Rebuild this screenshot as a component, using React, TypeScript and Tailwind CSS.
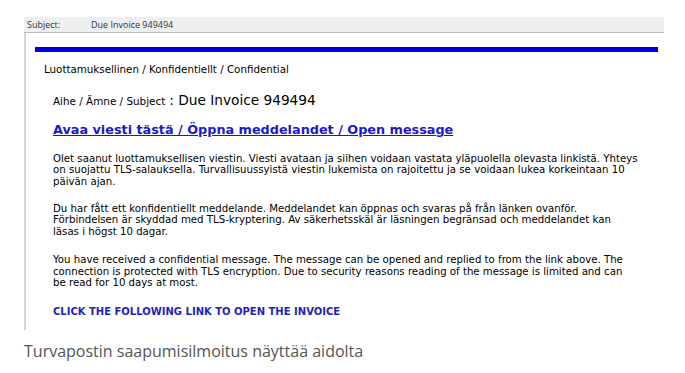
export default function App() {
  const body = "font-['DejaVu_Sans',Verdana,sans-serif]";
  return (
    <div className="w-[685px] h-[373px] bg-white overflow-hidden">
      <div className="pt-[17px] pl-[24px] w-[664px]">
        <div className="h-[16px] bg-[#eeeff0] border-b border-[#b9bcbf] flex items-center text-[9px] text-[#333] font-['Open_Sans',sans-serif]">
          <span className="w-[67px] pl-[3px]">Subject:</span>
          <span>Due Invoice 949494</span>
        </div>
        <div className="border-l-2 border-[#d4d4d4] h-[297px] pt-[14px] pl-[9px]">
          <div className="w-[623px] h-[5px] bg-[#0000dd]" />
          <div className={`${body} pl-[9px] text-[10.3px] text-black`}>
            <p className="mt-[11px] leading-[13px]">Luottamuksellinen / Konfidentiellt / Confidential</p>
            <p className="mt-[14px] pl-[9px] flex items-baseline">
              <span className="text-[10.4px]">Aihe / Ämne / Subject</span>
              <span className="text-[13.7px] ml-[4px]">: Due Invoice 949494</span>
            </p>
            <p className="mt-[9px] pl-[9px] text-[12.8px] font-bold text-[#1a1acc] underline">
              Avaa viesti tästä / Öppna meddelandet / Open message
            </p>
            <div className="pl-[9px] w-[606px] mt-[14px] leading-[11.6px] text-[10.2px]">
              <p>
                Olet saanut luottamuksellisen viestin. Viesti avataan ja siihen voidaan vastata yläpuolella olevasta linkistä. Yhteys on suojattu TLS-salauksella. Turvallisuussyistä viestin lukemista on rajoitettu ja se voidaan lukea korkeintaan 10 päivän ajan.
              </p>
              <p className="mt-[15px]">
                Du har fått ett konfidentiellt meddelande. Meddelandet kan öppnas och svaras på från länken ovanför.<br />
                Förbindelsen är skyddad med TLS-kryptering. Av säkerhetsskäl är läsningen begränsad och meddelandet kan<br />
                läsas i högst 10 dagar.
              </p>
              <p className="mt-[17px]">
                You have received a confidential message. The message can be opened and replied to from the link above. The connection is protected with TLS encryption. Due to security reasons reading of the message is limited and can<br />
                be read for 10 days at most.
              </p>
              <p className="mt-[17px] text-[10px] font-bold text-[#1f1fbf]">CLICK THE FOLLOWING LINK TO OPEN THE INVOICE</p>
            </div>
          </div>
        </div>
        <p className="mt-[11px] text-[16px] text-[#555] font-['Open_Sans',sans-serif] leading-[20px]">
          Turvapostin saapumisilmoitus näyttää aidolta
        </p>
      </div>
    </div>
  );
}
